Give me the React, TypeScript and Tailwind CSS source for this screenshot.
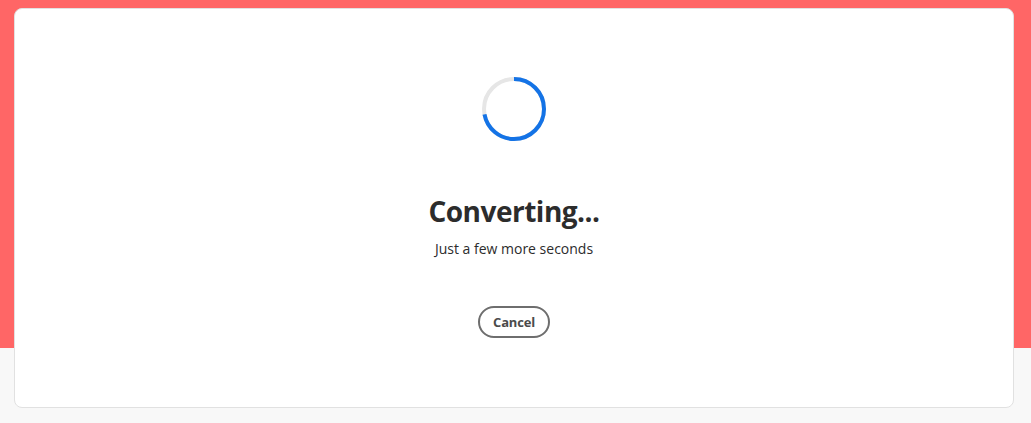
import React from "react";

export default function App() {
  return (
    <div
      className="w-[1031px] h-[423px] bg-[linear-gradient(#ff6666_348px,#f8f8f8_348px)] pt-2 pl-[14px]"
      style={{ fontFamily: '"Open Sans", "Noto Sans", sans-serif' }}
    >
      <div className="w-[1000px] h-[400px] rounded-lg border border-[#e1e1e1] bg-white flex flex-col items-center pt-[68px]">
        <svg width="64" height="64" viewBox="0 0 64 64" className="block">
          <circle cx="32" cy="32" r="30" fill="none" stroke="#e6e6e6" strokeWidth="4" />
          <circle
            cx="32"
            cy="32"
            r="30"
            fill="none"
            stroke="#1473e6"
            strokeWidth="4"
            strokeDasharray={`${(2 * Math.PI * 30 * 0.72).toFixed(2)} 1000`}
            transform="rotate(-90 32 32)"
          />
        </svg>
        <h1 className="mt-[50px] text-[28px] leading-[40px] font-bold text-[#2c2c2c] tracking-[-0.5px]">
          Converting...
        </h1>
        <p className="mt-[8px] text-[14px] leading-[20px] text-[#2c2c2c]">Just a few more seconds</p>
        <button className="mt-[47px] h-[32px] px-[13px] rounded-full border-2 border-[#6e6e6e] text-[13px] font-bold text-[#4b4b4b] leading-none tracking-[-0.2px]">
          Cancel
        </button>
      </div>
    </div>
  );
}
